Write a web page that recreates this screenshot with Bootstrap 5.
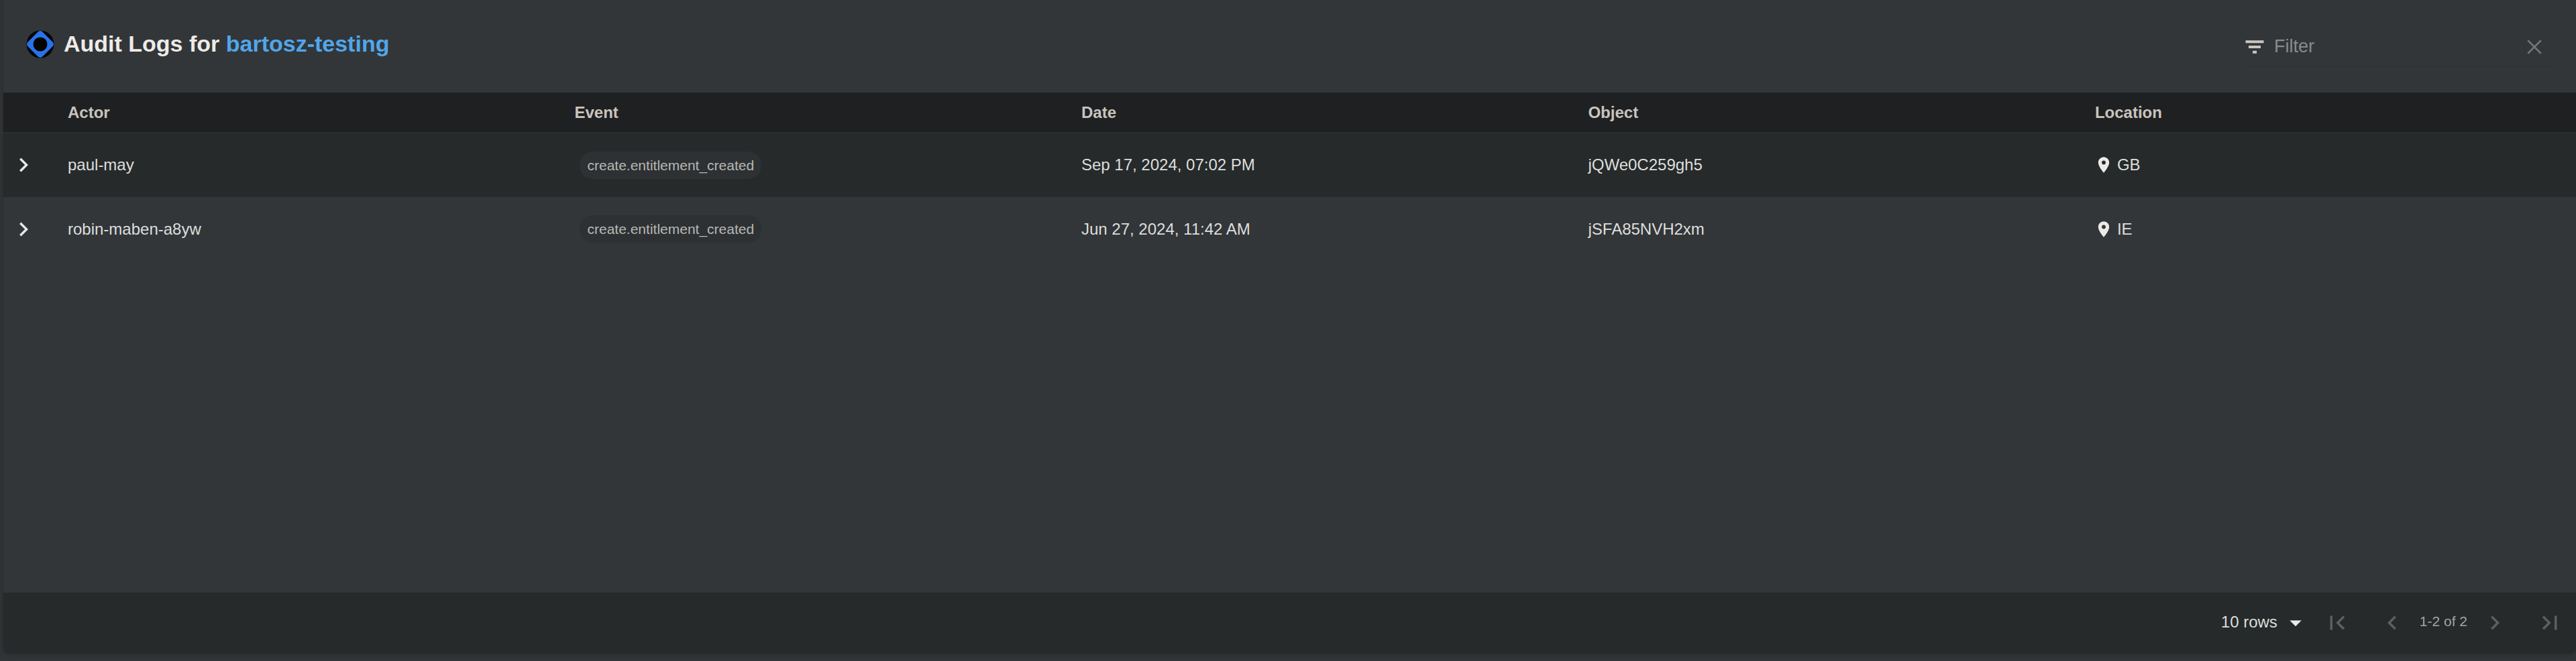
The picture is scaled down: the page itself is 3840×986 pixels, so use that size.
<!DOCTYPE html>
<html lang="en" data-bs-theme="dark">
<head>
<meta charset="utf-8">
<meta name="viewport" content="width=device-width, initial-scale=1">
<title>Audit Logs</title>
<link href="https://cdn.jsdelivr.net/npm/bootstrap@5.3.0/dist/css/bootstrap.min.css" rel="stylesheet">
<style>
  body { background: #313537; color: #dededc; font-family: "Liberation Sans", Arial, sans-serif; font-size: 24px; line-height: 32px; padding: 0 0 11px 5px; }
  svg { fill: currentColor; display: block; flex: none; }
  .log-panel { background: #323639; border-radius: 0 0 8px 8px; box-shadow: 0 0 6px #25282a; }
  .log-header { height: 138px; padding: 0 26px 0 34px; }
  .log-title { font-size: 34px; line-height: 40px; font-weight: 700; color: #eeebe7; gap: 14px; margin: 0 0 6px; }
  .log-title span { padding-bottom: 2px; }
  .log-title a { color: #51a6ea; text-decoration: none; }
  .filter-box { width: 471px; height: 58px; margin-top: 2px; border-bottom: 1px solid #2e3234; color: #c9c6c2; }
  .filter-box input { font-size: 27px; line-height: 36px; color: #dededc; padding: 0 0 2px; margin-left: 11px; outline: 0; }
  .filter-box input::placeholder { color: #8b8b8a; opacity: 1; }
  .plain-btn { display: block; background: none; border: 0; padding: 0; color: inherit; }
  .clear-btn { color: #737577; margin-right: 18px; }
  .log-table { table-layout: fixed; width: 100%; border-collapse: collapse; }
  .log-table th, .log-table td { padding: 0; vertical-align: middle; }
  .log-table thead tr { height: 60px; background: #1f2022; border-bottom: 2px solid #2c2e30; color: #c9c4be; }
  .log-table tbody tr { height: 96px; }
  .log-table tbody tr:nth-child(odd) { background: #262a2b; }
  .log-table tbody td { padding-bottom: 1px; }
  .col-toggle { width: 96px; }
  .col-data { width: 19.7%; }
  .row-toggle { margin-left: 9px; color: #eae8e5; }
  .event-chip { display: block; width: fit-content; margin-left: 8px; padding: 0 11px; border-radius: 20px; background: #2d3134; color: #b9b7b3; font-size: 21px; line-height: 41px; }
  .place { gap: 6px; margin-left: -1px; }
  .place svg { color: #eceae7; }
  .log-footer { height: 91px; padding-bottom: 2px; background: #262a2b; border-radius: 0 0 8px 8px; }
  .rows-select { appearance: none; background: transparent; border: 0; width: 132px; padding: 0 0 2px; color: #dededc; font-size: 24px; line-height: 32px; }
  .rows-caret { position: absolute; right: 0; top: 50%; translate: 0 -50%; pointer-events: none; color: #eceae7; }
  .page-step { padding: 0 20px; color: #5d6061; }
  .page-step:last-child { padding-right: 18px; }
  .page-range { font-size: 21px; color: #a5a4a1; line-height: 32px; padding-bottom: 4px; }
</style>
</head>
<body class="d-flex flex-column min-vh-100">
<main class="log-panel d-flex flex-column flex-grow-1">
  <header class="log-header d-flex align-items-center justify-content-between">
    <h1 class="log-title d-flex align-items-center">
      <svg width="42" height="42" viewBox="0 0 42 42" aria-hidden="true">
        <circle cx="21" cy="21" r="20.5" fill="#050608"/>
        <path d="M18 2.2Q21 0 24 2.2Q32 10 39.800 18Q42 21 39.800 24Q32 32 24 39.800Q21 42 18 39.800Q10 32 2.200 24Q0 21 2.200 18Q10 10 18 2.200Z" fill="#2a72ea"/>
        <circle cx="21" cy="21" r="10.500" fill="#020305"/>
      </svg>
      <span>Audit Logs for <a href="#">bartosz-testing</a></span>
    </h1>
    <div class="filter-box d-flex align-items-center">
      <svg width="36" height="36" viewBox="0 0 24 24" aria-hidden="true"><path d="M10 18.500h4v-2.600h-4zM3 5.500v2.600h18V5.500zM6 13.300h12v-2.600H6z"/></svg>
      <input id="filter" class="border-0 bg-transparent flex-grow-1" type="text" placeholder="Filter" aria-label="Filter">
      <button class="plain-btn clear-btn" type="button" aria-label="Clear filter">
        <svg width="36" height="36" viewBox="0 0 24 24"><path d="M5.500 5.500l13 13M18.500 5.500l-13 13" fill="none" stroke="currentColor" stroke-width="1.700"/></svg>
      </button>
    </div>
  </header>

  <table class="log-table">
    <colgroup><col class="col-toggle"><col class="col-data"><col class="col-data"><col class="col-data"><col class="col-data"><col></colgroup>
    <thead>
      <tr><td></td><th scope="col">Actor</th><th scope="col">Event</th><th scope="col">Date</th><th scope="col">Object</th><th scope="col">Location</th></tr>
    </thead>
    <tbody>
      <tr>
        <td><button class="plain-btn row-toggle" type="button" aria-label="Expand row"><svg width="42" height="42" viewBox="0 0 24 24"><path d="M10 6 8.590 7.410 13.170 12l-4.580 4.590L10 18l6-6z"/></svg></button></td>
        <td>paul-may</td>
        <td><span class="event-chip">create.entitlement_created</span></td>
        <td>Sep 17, 2024, 07:02 PM</td>
        <td>jQWe0C259gh5</td>
        <td><div class="place d-flex align-items-center"><svg width="28" height="28" viewBox="0 0 24 24" aria-hidden="true"><path d="M12 2C8.130 2 5 5.130 5 9c0 5.250 7 13 7 13s7-7.750 7-13c0-3.870-3.130-7-7-7zm0 9.500a2.500 2.500 0 0 1 0-5 2.500 2.500 0 0 1 0 5z"/></svg>GB</div></td>
      </tr>
      <tr>
        <td><button class="plain-btn row-toggle" type="button" aria-label="Expand row"><svg width="42" height="42" viewBox="0 0 24 24"><path d="M10 6 8.590 7.410 13.170 12l-4.580 4.590L10 18l6-6z"/></svg></button></td>
        <td>robin-maben-a8yw</td>
        <td><span class="event-chip">create.entitlement_created</span></td>
        <td>Jun 27, 2024, 11:42 AM</td>
        <td>jSFA85NVH2xm</td>
        <td><div class="place d-flex align-items-center"><svg width="28" height="28" viewBox="0 0 24 24" aria-hidden="true"><path d="M12 2C8.130 2 5 5.130 5 9c0 5.250 7 13 7 13s7-7.750 7-13c0-3.870-3.130-7-7-7zm0 9.500a2.500 2.500 0 0 1 0-5 2.500 2.500 0 0 1 0 5z"/></svg>IE</div></td>
      </tr>
    </tbody>
  </table>

  <footer class="log-footer d-flex align-items-center justify-content-end mt-auto">
    <div class="position-relative">
      <select class="rows-select d-block" aria-label="Rows per page"><option>10 rows</option><option>25 rows</option><option>50 rows</option></select>
      <svg class="rows-caret" width="42" height="42" viewBox="0 0 24 24" aria-hidden="true"><path d="m7 10 5 5 5-5z"/></svg>
    </div>
    <button class="plain-btn page-step" type="button" aria-label="First page"><svg width="42" height="42" viewBox="0 0 24 24"><path d="M18.410 16.590 13.820 12l4.590-4.590L17 6l-6 6 6 6zM6 6h2v12H6z"/></svg></button>
    <button class="plain-btn page-step" type="button" aria-label="Previous page"><svg width="42" height="42" viewBox="0 0 24 24"><path d="M15.410 7.410 14 6l-6 6 6 6 1.410-1.410L10.830 12z"/></svg></button>
    <span class="page-range">1-2 of 2</span>
    <button class="plain-btn page-step" type="button" aria-label="Next page"><svg width="42" height="42" viewBox="0 0 24 24"><path d="M10 6 8.590 7.410 13.170 12l-4.580 4.590L10 18l6-6z"/></svg></button>
    <button class="plain-btn page-step" type="button" aria-label="Last page"><svg width="42" height="42" viewBox="0 0 24 24"><path d="M5.590 7.410 10.180 12l-4.590 4.590L7 18l6-6-6-6zM16 6h2v12h-2z"/></svg></button>
  </footer>
</main>
<script src="https://cdn.jsdelivr.net/npm/bootstrap@5.3.0/dist/js/bootstrap.bundle.min.js"></script>
</body>
</html>
